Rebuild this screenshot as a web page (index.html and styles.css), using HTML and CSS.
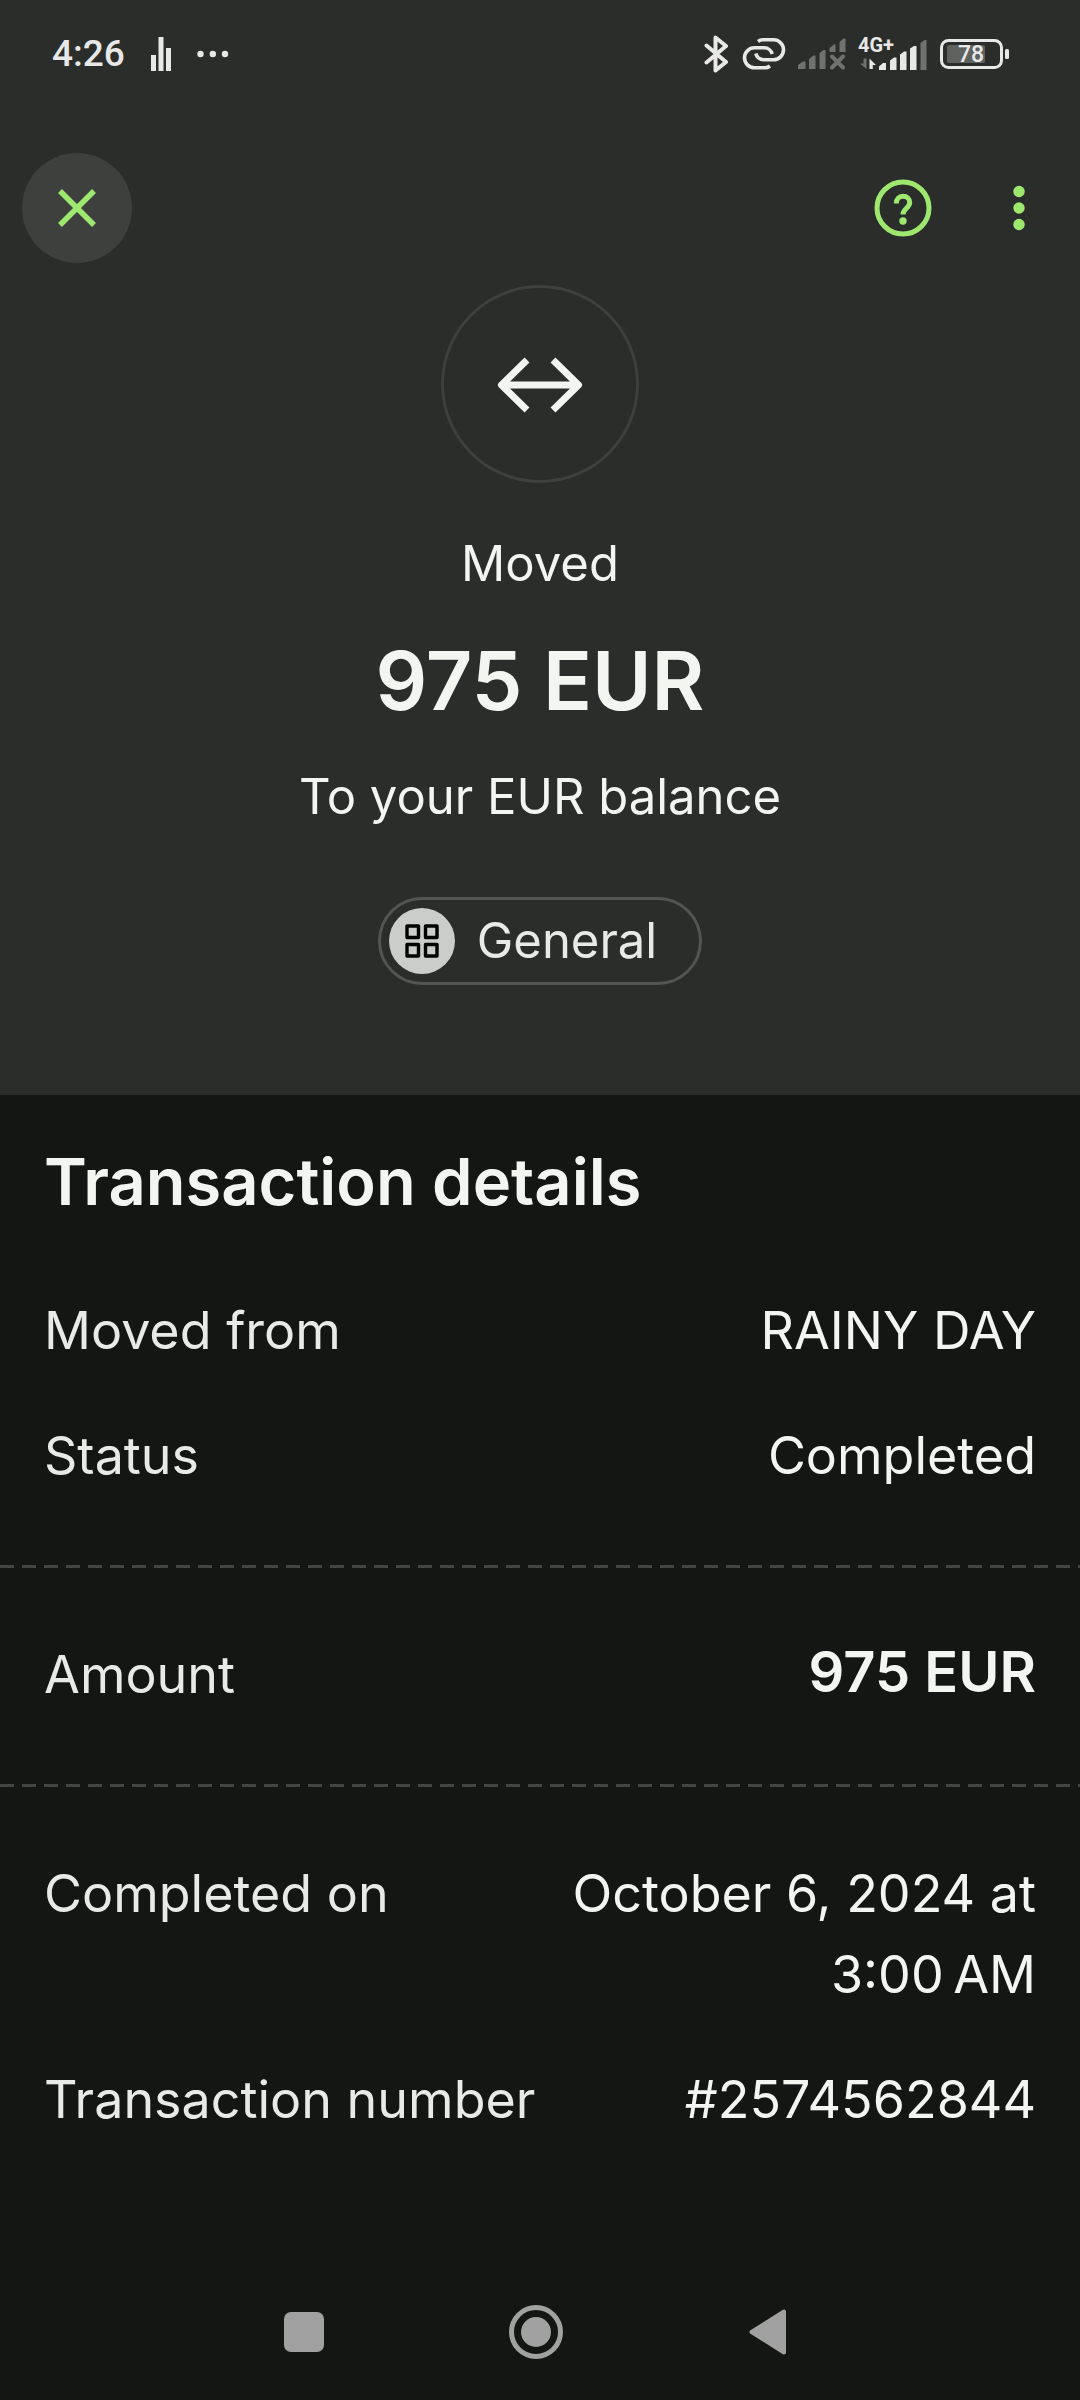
FILE: index.html
```html
<!DOCTYPE html>
<html lang="en">
<head>
<meta charset="utf-8">
<meta name="viewport" content="width=device-width, initial-scale=1">
<title>Transaction details</title>
<link rel="stylesheet" href="styles.css">
</head>
<body class="screen">
<header class="hero">
  <div class="status-bar">
    <div class="status-left">
      <span class="clock">4:26</span>
      <svg class="icon" width="20" height="34" viewBox="0 0 20 34" fill="currentColor" aria-hidden="true"><rect x="0" y="18" width="5" height="16"/><rect x="7.500" y="0" width="5" height="34"/><rect x="15" y="11" width="5" height="23"/></svg>
      <svg class="icon" width="32" height="8" viewBox="0 0 32 8" fill="currentColor" aria-hidden="true"><circle cx="3.500" cy="4" r="3.200"/><circle cx="15.800" cy="4" r="3.200"/><circle cx="28" cy="4" r="3.200"/></svg>
    </div>
    <div class="status-right">
      <svg class="icon" width="26" height="40" viewBox="0 0 26 40" fill="none" stroke="currentColor" stroke-width="4" stroke-linecap="round" stroke-linejoin="round" aria-label="Bluetooth"><path d="M2.500 11.500 22 28 11.500 36.500V3.500L22 12 2.500 28.500"/></svg>
      <svg class="icon" width="44" height="34" viewBox="0 0 44 34" fill="none" stroke="currentColor" stroke-width="3.600" aria-label="Linked"><path d="M16 4.500C17.500 3.300 19.500 2.800 21 2.800H31.500A10 10 0 0 1 31.500 22.800H22C17.500 22.800 14.500 19.500 13.800 16.500"/><path d="M28 29C26.500 30.200 25 30.800 23 30.800H12.500A10 10 0 0 1 12.500 10.800H22C26.500 10.800 29.500 14 30.200 17"/></svg>
      <svg class="icon icon-dim" width="48" height="32" viewBox="0 0 48 32" fill="currentColor" aria-label="No signal"><path d="M0 31V27L5 23.500H7.500V31zM11 31V21L15.500 17.500H17.500V31zM21.500 31V15L25.500 12H27.500V31zM31.500 14V10L36 6.500H37.500V14zM41.500 14V4L45.500 0.500H47.500V14z"/><path d="M34 18.500 45 29.500M45 18.500 34 29.500" fill="none" stroke="currentColor" stroke-width="4" stroke-linecap="round"/></svg>
      <svg class="icon" width="70" height="48" viewBox="0 -6 70 48" fill="currentColor" aria-label="4G+ signal"><text class="net-label" x="0" y="16">4G+</text><path d="M21 34V30.500L25 27H28V34zM32 34V24.500L36 21.500H38.500V34zM42 34V18.500L46 15.500H48.500V34zM52 34V12.500L56 10H58.500V34z"/><path d="M11.500 33V22.500L18 29H14.800V33z"/><path class="dim" d="M62.500 34V7L66.500 4H68.500V34zM8.500 22.500V33L2 27.500H5.500V22.500z"/></svg>
      <svg class="icon" width="70" height="30" viewBox="0 0 70 30" aria-label="Battery 78%"><rect class="charge" x="7" y="6" width="38" height="18" rx="2"/><rect x="1.500" y="1.500" width="60" height="27" rx="7" fill="none" stroke="currentColor" stroke-width="3"/><rect x="65" y="10" width="4" height="10" rx="1.500" fill="currentColor"/><text class="charge-label" x="18" y="23" fill="currentColor">78</text></svg>
    </div>
  </div>

  <nav class="app-bar" aria-label="Transaction">
    <button class="icon-button icon-button-filled" type="button" aria-label="Close">
      <svg width="38" height="38" viewBox="0 0 38 38" fill="none" stroke="currentColor" stroke-width="5.500"><path d="M2 2 36 36M36 2 2 36"/></svg>
    </button>
    <div class="app-actions">
      <button class="icon-button" type="button" aria-label="Help">
        <svg width="58" height="58" viewBox="0 0 58 58" fill="none" stroke="currentColor" stroke-width="5"><circle cx="29" cy="29" r="26"/><path d="M22.300 24.500C22.300 19.800 25 17.300 29 17.300C33 17.300 35.700 20 35.700 23.500C35.700 29 29 29.500 29 35.500"/><circle cx="29" cy="42" r="3.700" fill="currentColor" stroke="none"/></svg>
      </button>
      <button class="icon-button" type="button" aria-label="More options">
        <svg width="12" height="46" viewBox="0 0 12 46" fill="currentColor"><circle cx="6" cy="6.500" r="5.700"/><circle cx="6" cy="23" r="5.700"/><circle cx="6" cy="39.500" r="5.700"/></svg>
      </button>
    </div>
  </nav>

  <div class="summary">
    <div class="summary-icon">
      <svg width="86" height="58" viewBox="0 0 86 58" fill="none" stroke="currentColor" stroke-width="7" stroke-linejoin="round" aria-hidden="true"><path d="M5 30H81M30 5 4.500 30 30 55M56 5 81.500 30 56 55"/></svg>
    </div>
    <p class="summary-text">Moved</p>
    <h1 class="summary-amount">975 EUR</h1>
    <p class="summary-text">To your EUR balance</p>
    <button class="chip" type="button">
      <span class="chip-icon">
        <svg width="34" height="34" viewBox="0 0 34 34" fill="none" stroke="currentColor" stroke-width="3.400" stroke-linejoin="round" aria-hidden="true"><path d="M2 2h11.500v11.500H2zM20.500 2H32v11.500H20.500zM2 20.500h11.500V32H2zM20.500 20.500H32V32H20.500z"/></svg>
      </span>
      General
    </button>
  </div>
</header>

<main class="details">
  <h2 class="details-title">Transaction details</h2>
  <dl class="group">
    <div class="row"><dt>Moved from</dt><dd>RAINY DAY</dd></div>
    <div class="row"><dt>Status</dt><dd>Completed</dd></div>
  </dl>
  <dl class="group">
    <div class="row"><dt>Amount</dt><dd class="total">975 EUR</dd></div>
  </dl>
  <dl class="group">
    <div class="row"><dt>Completed on</dt><dd>October 6, 2024 at 3:00&#8239;AM</dd></div>
    <div class="row"><dt>Transaction number</dt><dd>#2574562844</dd></div>
  </dl>
</main>

<nav class="system-nav" aria-label="System">
  <button class="nav-button" type="button" aria-label="Recent apps"><svg width="40" height="40" viewBox="0 0 40 40" fill="currentColor"><rect width="40" height="40" rx="7"/></svg></button>
  <button class="nav-button" type="button" aria-label="Home"><svg width="54" height="54" viewBox="0 0 54 54"><circle cx="27" cy="27" r="24.500" fill="none" stroke="currentColor" stroke-width="5"/><circle cx="27" cy="27" r="15" fill="currentColor"/></svg></button>
  <button class="nav-button" type="button" aria-label="Back"><svg width="38" height="46" viewBox="0 0 38 46" fill="currentColor" stroke="currentColor" stroke-width="4" stroke-linejoin="round"><path d="M2.500 23 35 2.500V43.500z"/></svg></button>
</nav>
</body>
</html>
```

FILE: styles.css
```css
:root {
  --surface: #141613;
  --surface-raised: #2b2d2a;
  --neutral: #3e403d;
  --outline: #535552;
  --dash: #434541;
  --text: #f3f5f0;
  --text-muted: #e8eae5;
  --accent: #9fe870;
  --system: #e8e8e8;
  --system-dim: #70726f;
  --nav: #a0a1a0;
}

*,
*::before,
*::after {
  box-sizing: border-box;
}

.screen {
  display: flex;
  flex-direction: column;
  min-height: 100vh;
  margin: 0;
  background: var(--surface);
  color: var(--text);
  font-family: Inter, "Liberation Sans", sans-serif;
}

button {
  padding: 0;
  border: 0;
  background: none;
  color: inherit;
  font: inherit;
  cursor: pointer;
}

.icon,
button svg {
  display: block;
  flex: none;
}

.hero {
  padding-bottom: 110px;
  background: var(--surface-raised);
}

/* Status bar */
.status-bar {
  display: flex;
  align-items: center;
  justify-content: space-between;
  height: 108px;
  padding: 0 70px 0 52px;
  color: var(--system);
  font-family: Roboto, "Liberation Sans", sans-serif;
  font-weight: 500;
}

.status-left {
  display: flex;
  align-items: center;
  gap: 26px;
}

.status-right {
  display: flex;
  align-items: center;
  gap: 12px;
}

.clock {
  font-size: 37px;
  line-height: 48px;
}

.icon-dim {
  color: var(--system-dim);
}

.dim {
  fill: var(--system-dim);
}

.net-label {
  font-size: 20px;
  font-weight: 700;
}

.charge {
  fill: #5f615e;
}

.charge-label {
  font-size: 23px;
}

/* App bar */
.app-bar {
  display: flex;
  align-items: center;
  justify-content: space-between;
  padding: 45px 6px 22px 22px;
  color: var(--accent);
}

.app-actions {
  display: flex;
  gap: 6px;
}

.icon-button {
  display: flex;
  align-items: center;
  justify-content: center;
  width: 110px;
  height: 110px;
  border-radius: 50%;
}

.icon-button-filled {
  background: var(--neutral);
}

/* Summary */
.summary {
  display: flex;
  flex-direction: column;
  align-items: center;
  text-align: center;
}

.summary-icon {
  display: flex;
  align-items: center;
  justify-content: center;
  width: 198px;
  height: 198px;
  margin-bottom: 51px;
  border: 3px solid var(--neutral);
  border-radius: 50%;
}

.summary-text {
  margin: 0;
  font-size: 49px;
  line-height: 60px;
}

.summary-amount {
  margin: 37px 0 36px;
  font-size: 81px;
  font-weight: 600;
  line-height: 100px;
}

.chip {
  display: flex;
  align-items: center;
  gap: 22px;
  height: 88px;
  margin-top: 70px;
  padding: 0 42px 0 8px;
  border: 3px solid var(--outline);
  border-radius: 44px;
  color: var(--text-muted);
  font-size: 49px;
  line-height: 60px;
}

.chip-icon {
  display: flex;
  align-items: center;
  justify-content: center;
  width: 66px;
  height: 66px;
  border-radius: 50%;
  background: #cbcdca;
  color: #000;
}

/* Details */
.details {
  padding-top: 47px;
}

.details-title {
  margin: 0 0 2px;
  padding: 0 44px;
  font-size: 65px;
  font-weight: 600;
  line-height: 80px;
}

.group {
  margin: 0;
  padding: 44px 44px 47px;
}

/* Dashed rule: 14px dash, 8px gap */
.group + .group::before {
  display: block;
  height: 3px;
  margin: -44px -44px 44px;
  background: repeating-linear-gradient(90deg, var(--dash) 0 14px, transparent 14px 22px);
  content: "";
}

.row {
  display: flex;
  justify-content: space-between;
  gap: 44px;
  padding: 22px 0;
  font-size: 52px;
  line-height: 81px;
}

.row dt {
  flex: none;
  color: var(--text-muted);
}

.row dd {
  margin: 0;
  text-align: right;
}

.row .total {
  font-size: 56px;
  font-weight: 600;
  line-height: 76px;
}

/* System navigation */
.system-nav {
  display: flex;
  justify-content: center;
  gap: 122px;
  margin-top: auto;
  padding: 0 8px 13px 0;
  color: var(--nav);
}

.nav-button {
  display: flex;
  align-items: center;
  justify-content: center;
  width: 110px;
  height: 110px;
}
```
